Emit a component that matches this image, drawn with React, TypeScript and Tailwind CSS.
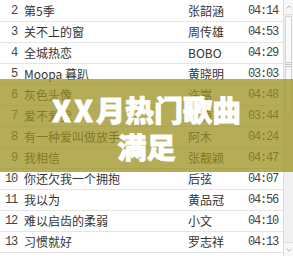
import React from 'react';

interface Song {
  no: number;
  title: string;
  artist: string;
  time: string;
}

const SONGS: Song[] = [
  { no: 2, title: '第5季', artist: '张韶涵', time: '04:14' },
  { no: 3, title: '关不上的窗', artist: '周传雄', time: '04:53' },
  { no: 4, title: '全城热恋', artist: 'BOBO', time: '04:29' },
  { no: 5, title: 'Moopa 暮趴', artist: '黄晓明', time: '03:03' },
  { no: 6, title: '灰色头像', artist: '许嵩', time: '04:48' },
  { no: 7, title: '爱不爱我', artist: '梁静茹', time: '03:44' },
  { no: 8, title: '有一种爱叫做放手', artist: '阿木', time: '04:24' },
  { no: 9, title: '我相信', artist: '张靓颖', time: '04:47' },
  { no: 10, title: '你还欠我一个拥抱', artist: '后弦', time: '04:07' },
  { no: 11, title: '我以为', artist: '黄品冠', time: '04:56' },
  { no: 12, title: '难以启齿的柔弱', artist: '小文', time: '04:10' },
  { no: 13, title: '习惯就好', artist: '罗志祥', time: '04:13' },
];

const App: React.FC = () => {
  return (
    <div className="relative w-[293px] h-[256px] overflow-hidden bg-white flex">
      {/* song list */}
      <div className="flex-1 flex flex-col pt-px">
        {SONGS.map(s => (
          <div key={s.no} className="h-[21px] shrink-0 flex items-center border-b border-[#e4e4e4] text-[12px] text-[#333]">
            <span className="w-[17px] text-right font-['Liberation_Mono',monospace] tracking-[-1.2px] text-[#444]">{s.no}</span>
            <span className="ml-[7px] flex-1 font-['Noto_Sans_CJK_SC',sans-serif] whitespace-nowrap">{s.title}</span>
            <span className="w-[60px] font-['Noto_Sans_CJK_SC',sans-serif] whitespace-nowrap">{s.artist}</span>
            <span className="w-[35px] font-['Liberation_Mono',monospace] tracking-[-1.2px] text-[#444]">{s.time}</span>
          </div>
        ))}
      </div>

      {/* scrollbar */}
      <div className="w-[10px] flex flex-col bg-[#f0f0f0] border-l border-[#dcdcdc]">
        <div className="h-[15px] flex items-center justify-center border-b border-[#e0e0e0] bg-[#f7f7f7]">
          <svg width="6" height="4" viewBox="0 0 6 4"><path d="M0.5 3.5 L3 1 L5.5 3.5" fill="none" stroke="#b8b8b8" strokeWidth="1" /></svg>
        </div>
        <div className="mt-px h-[97px] mx-px flex items-center justify-center border border-[#d4d4d4] bg-[#f9f9f9] rounded-[1px]">
          <div className="flex flex-col gap-[1px]">
            <div className="w-[5px] h-px bg-[#c4c4c4]" />
            <div className="w-[5px] h-px bg-[#c4c4c4]" />
            <div className="w-[5px] h-px bg-[#c4c4c4]" />
          </div>
        </div>
        <div className="flex-1" />
        <div className="h-[14px] flex items-center justify-center border-t border-[#e0e0e0] bg-[#f7f7f7]">
          <svg width="6" height="4" viewBox="0 0 6 4"><path d="M0.5 0.5 L3 3 L5.5 0.5" fill="none" stroke="#b8b8b8" strokeWidth="1" /></svg>
        </div>
      </div>

      {/* overlay banner */}
      <div className="absolute left-0 right-0 top-[79px] h-[93px] bg-[#9c9020]/75 flex flex-col items-center pt-[12px] text-white font-black text-[29px] leading-[37px] [-webkit-text-stroke:0.8px_white] font-['Noto_Sans_CJK_SC',sans-serif]">
        <div className="whitespace-nowrap"><span className="tracking-[3px]">XX</span>月热门歌曲</div>
        <div className="whitespace-nowrap">满足</div>
      </div>
    </div>
  );
};

export default App;
